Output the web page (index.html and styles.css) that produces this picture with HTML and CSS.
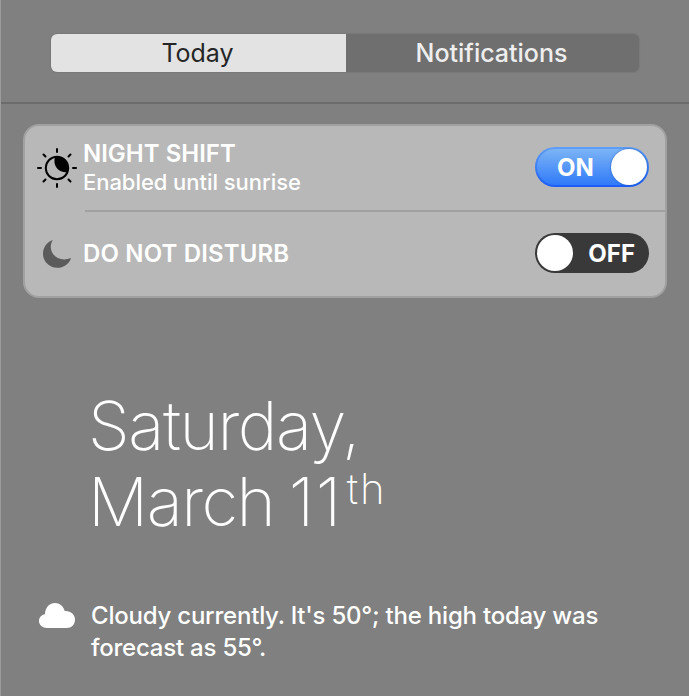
FILE: index.html
```html
<!DOCTYPE html>
<html lang="en">
<head>
<meta charset="utf-8">
<title>Notification Center</title>
<link rel="stylesheet" href="styles.css">
</head>
<body>
<main class="panel">
  <header class="header">
    <nav class="tabs">
      <button class="tab tab-active"><span class="today">Today</span></button>
      <button class="tab"><span class="notifications">Notifications</span></button>
    </nav>
  </header>
  <section class="card">
    <div class="row">
      <svg class="icon" width="40" height="40" viewBox="0 0 40 40">
        <g fill="none" stroke="#000" stroke-width="2" stroke-linecap="round">
          <circle cx="20" cy="20" r="11.2"/>
          <path d="M20 1v3M20 36v3M1 20h3M36 20h3M6.5 6.5l2 2M31.5 31.5l2 2M6.5 33.5l2-2M31.5 8.500l2-2"/>
        </g>
        <path d="M18 9C15.500 17 21 25.500 30.500 24A11.200 11.200 0 0 0 18 9Z"/>
      </svg>
      <div class="labels">
        <div class="title night">NIGHT SHIFT</div>
        <div class="subtitle">Enabled until sunrise</div>
      </div>
      <div class="toggle toggle-on"><span class="state">ON</span><span class="knob"></span></div>
    </div>
    <div class="row">
      <svg class="icon" width="40" height="40" viewBox="0 0 40 40">
        <path fill="#5b5b5b" d="M15.800 6C6 9.500 3.200 21 9 28.500C16.500 37.500 31 34.500 34 24C20.500 29.500 9 17.500 15.800 6Z"/>
      </svg>
      <div class="labels"><div class="title dnd">DO NOT DISTURB</div></div>
      <div class="toggle"><span class="knob"></span><span class="state">OFF</span></div>
    </div>
  </section>
  <h1 class="date"><span class="weekday">Saturday,</span><br><span class="month">March <span class="day">11</span></span><sup>th</sup></h1>
  <section class="weather">
    <svg class="cloud" width="36" height="26" viewBox="0 0 36 26">
      <path fill="#fff" d="M8 25C3.500 25 0 22 0 18C0 14.500 2.500 11.700 6 11.200C6.200 4.500 10.500 0 16 0C20.500 0 24.500 3 25.700 8C31.500 7.500 36 11.500 36 16.500C36 21.500 32.500 25 27.500 25Z"/>
    </svg>
    <p><span class="line1">Cloudy currently. It's 50°; the high today was</span><br><span class="line2">forecast as 55°.</span></p>
  </section>
</main>
</body>
</html>
```
FILE: styles.css
```css
* { box-sizing: border-box; }
body {
  margin: 0;
  background: #808080;
  color: #fff;
  font-family: Inter, "Liberation Sans", sans-serif;
}
.panel {
  height: 696px;
  overflow: hidden;
  border-left: 1px solid #9c9c9c;
}
.header {
  height: 104px;
  padding: 34px 50px 0;
  border-bottom: 2px solid #6c6c6c;
}
.tabs {
  display: flex;
  width: 588px;
  height: 38px;
  border-radius: 6px;
  background: #6f6f6f;
  box-shadow: 0 0 1px 1px #787878;
  overflow: hidden;
}
.tab {
  flex: 1;
  padding: 0 2px 0 0;
  border: 0;
  background: none;
  color: #eee;
  font: 500 25px/38px Inter, sans-serif;
}
.tab-active {
  flex: 0 0 295px;
  background: #e3e3e3;
  color: #262626;
  font-weight: 400;
}
.card {
  width: 644px;
  height: 174px;
  margin: 20px 0 0 22px;
  border: 2px solid #a1a1a1;
  border-radius: 16px;
  background: #b8b8b8;
}
.row {
  display: flex;
  align-items: center;
  height: 84px;
  padding: 0 16px 2px 12px;
}
.row + .row {
  height: 86px;
  border-top: 2px solid transparent;
  background: linear-gradient(#a1a1a1, #a1a1a1) 60px 0 / 100% 2px no-repeat border-box;
}
.icon { flex: none; margin-top: 2px; }
.labels {
  flex: 1;
  padding: 2px 0 0 6px;
  white-space: nowrap;
}
.title { font-size: 24px; font-weight: 600; line-height: 28px; }
.dnd { letter-spacing: 0.15px; }
.subtitle { font-size: 22px; font-weight: 500; line-height: 28px; letter-spacing: -0.05px; }
.toggle {
  display: flex;
  align-items: center;
  justify-content: space-between;
  width: 114px;
  height: 40px;
  padding: 0 14px 0 2px;
  border-radius: 20px;
  background: #393939;
}
.toggle-on {
  padding: 2px 2px 2px 22px;
  background:
    linear-gradient(#7db4f6, #2f7af9) 2px 2px / 110px 36px no-repeat,
    linear-gradient(#5f9ff4, #1c5cf7);
  background:
    linear-gradient(#7db4f6, #2f7af9) padding-box,
    linear-gradient(#5f9ff4, #1c5cf7) border-box;
  border: 2px solid transparent;
  padding: 0 0 0 20px;
}
.knob {
  width: 36px;
  height: 36px;
  border-radius: 50%;
  background: #fff;
}
.toggle-on .knob { box-shadow: 0 0 2px #174fae; }
.state { padding-top: 2px; font-size: 24px; font-weight: 700; line-height: 38px; }
.toggle-on .state { line-height: 34px; }
.date {
  margin: 90px 0 0 87px;
  font-size: 67px;
  font-weight: 250;
  line-height: 76px;
  white-space: nowrap;
}
.weekday { letter-spacing: -1.4px; }
.month { letter-spacing: -1.5px; }
.day { margin-left: -3px; letter-spacing: 1.5px; }
.date sup {
  margin-left: 4px;
  font-size: 42px;
  font-weight: 200;
  letter-spacing: 2px;
  line-height: 0;
  vertical-align: 22px;
}
.weather {
  display: flex;
  margin: 60px 0 0 38px;
}
.cloud { margin-top: 3px; }
.weather p {
  margin: 0 0 0 16px;
  font-size: 24px;
  font-weight: 500;
  letter-spacing: -0.22px;
  line-height: 32px;
  white-space: nowrap;
}
```
